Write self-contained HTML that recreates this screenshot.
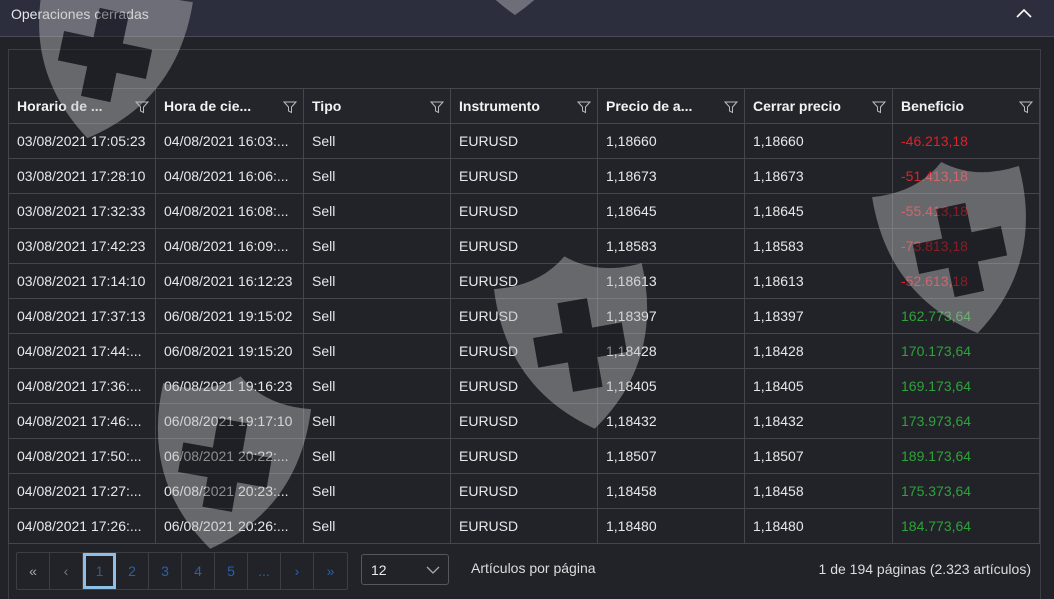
<!DOCTYPE html><html><head><meta charset="utf-8"><style>
body{margin:0;width:1054px;height:598px;background:#212329;font-family:"Liberation Sans",sans-serif;overflow:hidden;position:relative;color:#e8e8ea}
.top{position:absolute;left:0;top:0;width:1054px;height:36px;background:#2c2d3d;border-bottom:1px solid #4a4b57}
.top span{position:absolute;left:11px;top:6px;font-size:14px;color:#e6e6ea}
.box{position:absolute;left:8px;top:49px;width:1031px;height:549px;border:1px solid #3c3e44;border-bottom:none}
table{position:absolute;left:8px;top:88px;border-collapse:collapse;font-size:14px}
td,th{border:1px solid #44464c;height:34px;padding:0 0 0 8px;text-align:left;white-space:nowrap}
th{font-weight:bold;color:#f2f2f2;position:relative;background:#23252b}
th svg{position:absolute;right:6px;top:11px}
.r{color:#e0202a}.g{color:#2fa23a}
.wm{position:absolute;z-index:5;opacity:.42}
.pg{position:absolute;left:16px;top:552px;height:36px;border:1px solid #3c3e44;display:flex;border-radius:2px}
.pg div{width:33px;height:36px;border-right:1px solid #3c3e44;text-align:center;line-height:36px;font-size:14px;color:#2d5fa8;box-sizing:border-box}
.sel{position:absolute;left:361px;top:554px;width:88px;height:31px;border:1px solid #55575d;border-radius:3px;font-size:14px;line-height:31px;box-sizing:border-box;padding-left:9px}
</style></head><body>
<div class="top"><span>Operaciones cerradas</span>
<svg style="position:absolute;left:1016px;top:8px" width="16" height="10"><path d="M1 9 L8 2 L15 9" stroke="#fff" stroke-width="1.6" fill="none"/></svg></div>
<div class="box"></div>
<table>
<tr><th style="width:138px">Horario de ...<svg width="14" height="14"><path d="M1 2H13L8.5 7V12.5L5.5 11V7Z" stroke="#bbb" fill="none"/></svg></th><th style="width:139px">Hora de cie...<svg width="14" height="14"><path d="M1 2H13L8.5 7V12.5L5.5 11V7Z" stroke="#bbb" fill="none"/></svg></th><th style="width:138px">Tipo<svg width="14" height="14"><path d="M1 2H13L8.5 7V12.5L5.5 11V7Z" stroke="#bbb" fill="none"/></svg></th><th style="width:138px">Instrumento<svg width="14" height="14"><path d="M1 2H13L8.5 7V12.5L5.5 11V7Z" stroke="#bbb" fill="none"/></svg></th><th style="width:138px">Precio de a...<svg width="14" height="14"><path d="M1 2H13L8.5 7V12.5L5.5 11V7Z" stroke="#bbb" fill="none"/></svg></th><th style="width:139px">Cerrar precio<svg width="14" height="14"><path d="M1 2H13L8.5 7V12.5L5.5 11V7Z" stroke="#bbb" fill="none"/></svg></th><th style="width:138px">Beneficio<svg width="14" height="14"><path d="M1 2H13L8.5 7V12.5L5.5 11V7Z" stroke="#bbb" fill="none"/></svg></th></tr>
<tr><td>03/08/2021 17:05:23</td><td>04/08/2021 16:03:...</td><td>Sell</td><td>EURUSD</td><td>1,18660</td><td>1,18660</td><td class="r">-46.213,18</td></tr>
<tr><td>03/08/2021 17:28:10</td><td>04/08/2021 16:06:...</td><td>Sell</td><td>EURUSD</td><td>1,18673</td><td>1,18673</td><td class="r">-51.413,18</td></tr>
<tr><td>03/08/2021 17:32:33</td><td>04/08/2021 16:08:...</td><td>Sell</td><td>EURUSD</td><td>1,18645</td><td>1,18645</td><td class="r">-55.413,18</td></tr>
<tr><td>03/08/2021 17:42:23</td><td>04/08/2021 16:09:...</td><td>Sell</td><td>EURUSD</td><td>1,18583</td><td>1,18583</td><td class="r">-73.813,18</td></tr>
<tr><td>03/08/2021 17:14:10</td><td>04/08/2021 16:12:23</td><td>Sell</td><td>EURUSD</td><td>1,18613</td><td>1,18613</td><td class="r">-52.613,18</td></tr>
<tr><td>04/08/2021 17:37:13</td><td>06/08/2021 19:15:02</td><td>Sell</td><td>EURUSD</td><td>1,18397</td><td>1,18397</td><td class="g">162.773,64</td></tr>
<tr><td>04/08/2021 17:44:...</td><td>06/08/2021 19:15:20</td><td>Sell</td><td>EURUSD</td><td>1,18428</td><td>1,18428</td><td class="g">170.173,64</td></tr>
<tr><td>04/08/2021 17:36:...</td><td>06/08/2021 19:16:23</td><td>Sell</td><td>EURUSD</td><td>1,18405</td><td>1,18405</td><td class="g">169.173,64</td></tr>
<tr><td>04/08/2021 17:46:...</td><td>06/08/2021 19:17:10</td><td>Sell</td><td>EURUSD</td><td>1,18432</td><td>1,18432</td><td class="g">173.973,64</td></tr>
<tr><td>04/08/2021 17:50:...</td><td>06/08/2021 20:22:...</td><td>Sell</td><td>EURUSD</td><td>1,18507</td><td>1,18507</td><td class="g">189.173,64</td></tr>
<tr><td>04/08/2021 17:27:...</td><td>06/08/2021 20:23:...</td><td>Sell</td><td>EURUSD</td><td>1,18458</td><td>1,18458</td><td class="g">175.373,64</td></tr>
<tr><td>04/08/2021 17:26:...</td><td>06/08/2021 20:26:...</td><td>Sell</td><td>EURUSD</td><td>1,18480</td><td>1,18480</td><td class="g">184.773,64</td></tr>
</table>
<div class="pg"><div style="color:#aaa">«</div><div style="color:#777">‹</div><div style="border:3px solid #8fbfe6;color:#3a5a80;line-height:30px">1</div><div>2</div><div>3</div><div>4</div><div>5</div><div>...</div><div>›</div><div style="border:none">»</div></div>
<div class="sel">12<svg style="position:absolute;right:8px;top:11px" width="14" height="9"><path d="M1 1L7 7L13 1" stroke="#aaa" fill="none" stroke-width="1.3"/></svg></div>
<div style="position:absolute;left:471px;top:560px;font-size:14px;color:#ddd">Artículos por página</div>
<div style="position:absolute;right:23px;top:561px;font-size:14px;color:#ddd">1 de 194 páginas (2.323 artículos)</div>
<svg width="1054" height="598" style="position:absolute;left:0;top:0;z-index:5;opacity:.45;pointer-events:none">
<defs><g id="s"><path d="M0 20 Q45 25 75 0 Q105 25 150 20 Q155 120 75 175 Q-5 120 0 20Z" fill="#bdbdbd"/><path d="M60 45H90V75H120V105H90V135H60V105H30V75H60Z" fill="#1c1d21"/></g></defs>
<use href="#s" transform="translate(30,-35) rotate(12 75 90)"/>
<use href="#s" transform="translate(505,255) rotate(-10 75 90)"/>
<use href="#s" transform="translate(150,375) rotate(10 75 90)"/>
<use href="#s" transform="translate(885,160) rotate(-12 75 90)"/>
<use href="#s" transform="translate(440,-160) rotate(0 75 90)"/>
</svg>
</body></html>
